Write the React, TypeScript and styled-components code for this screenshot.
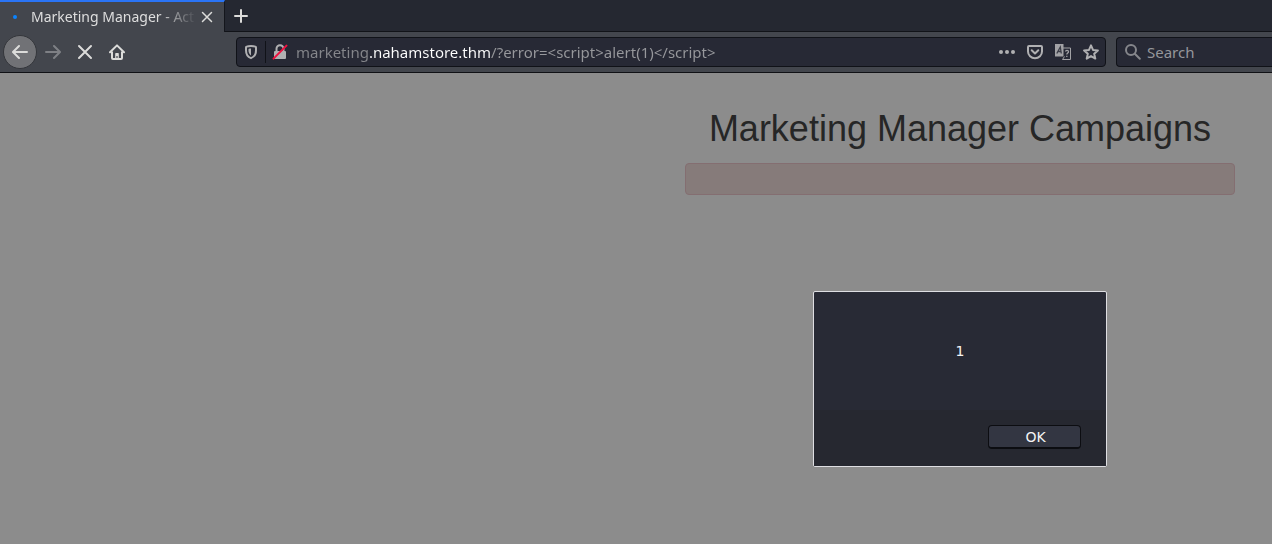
import React, { useState } from "react";
import styled, { createGlobalStyle } from "styled-components";

const GlobalStyle = createGlobalStyle`
  *, *::before, *::after { box-sizing: border-box; }
  html, body, #root { height: 100%; }
  body {
    margin: 0;
    overflow: hidden;
    background: #8c8c8c;
    font-family: "Noto Sans", sans-serif;
    font-size: 15px;
  }
  button { font: inherit; color: inherit; }
`;

const Browser = styled.div`
  display: flex;
  flex-direction: column;
  min-height: 100%;
`;

const TabStrip = styled.header`
  display: flex;
  height: 32px;
  background: #252831;
`;

const Tab = styled.div`
  display: flex;
  align-items: center;
  width: 225px;
  height: 32px;
  padding: 0 7px 0 12px;
  border-top: 2px solid #2a74f5;
  border-right: 1px solid #14161c;
  background: #43464d;
  color: #dedede;
  font-size: 14px;
`;

const Throbber = styled.span`
  width: 4px;
  height: 4px;
  margin: 0 14px 0 1px;
  border-radius: 50%;
  background: #0a84ff;
`;

const TabTitle = styled.span`
  flex: 1;
  white-space: nowrap;
  line-height: 20px;
  -webkit-mask-image: linear-gradient(to left, transparent, #000 40px);
  mask-image: linear-gradient(to left, transparent, #000 40px);
`;

const IconButton = styled.button<{ $size: number; $tone?: string }>`
  display: flex;
  flex: none;
  align-items: center;
  justify-content: center;
  width: ${(p) => p.$size}px;
  height: ${(p) => p.$size}px;
  padding: 0;
  border: 0;
  background: none;
  color: ${(p) => p.$tone ?? "#dcdcda"};
`;

const NewTabArea = styled.div`
  display: flex;
  flex: 1;
  align-items: center;
  padding-left: 2px;
  border-bottom: 1px solid #111318;
`;

const Toolbar = styled.nav`
  display: flex;
  align-items: center;
  height: 41px;
  padding-left: 3px;
  border-bottom: 1px solid #101115;
  background: #43464d;
`;

const BackButton = styled(IconButton)`
  border: 1px solid #34363b;
  border-radius: 50%;
  background: #717276;
`;

const Field = styled.div`
  display: flex;
  align-items: center;
  height: 30px;
  border: 1px solid #101218;
  border-radius: 4px;
  background: #272935;
  color: #a9aaae;
`;

const AddressField = styled(Field)`
  flex: 1;
  min-width: 0;
  margin: 0 10px 0 103px;
`;

const SearchField = styled(Field)`
  width: 156px;
  padding-left: 8px;
  border-right: 0;
  border-radius: 4px 0 0 4px;
  color: #85868b;
`;

const Divider = styled.span`
  width: 1px;
  height: 22px;
  background: #101218;
`;

const TextInput = styled.input`
  flex: 1;
  min-width: 0;
  height: 28px;
  padding: 0;
  border: 0;
  outline: 0;
  background: none;
  color: #dedede;
  font: inherit;
  line-height: 20px;
  &::placeholder { color: #95969b; opacity: 1; }
`;

/* The registrable domain is lit while the rest of the address stays dim. */
const AddressInput = styled(TextInput)`
  background: linear-gradient(to right, #85868b 74px, #ffffff 74px, #ffffff 195px, #97989c 195px);
  -webkit-background-clip: text;
  background-clip: text;
  color: transparent;
  margin-left: 2px;
`;

const SearchInput = styled(TextInput)`
  margin-left: 6px;
`;

const Viewport = styled.main`
  display: flex;
  flex: 1;
  justify-content: flex-end;
  padding: 36px 37px 0;
  background: #8c8c8c;
`;

const Column = styled.section`
  position: relative;
  width: 550px;
  max-width: 100%;
`;

const Heading = styled.h1`
  margin: 0 0 14px;
  color: #262626;
  font: 400 36px/40px "Liberation Sans", Arial, sans-serif;
  text-align: center;
`;

const ErrorBanner = styled.div`
  height: 32px;
  border: 1px solid #846e71;
  border-radius: 4px;
  background: #867b7a;
`;

const Dialog = styled.div`
  position: absolute;
  top: 182px;
  left: 50%;
  width: 294px;
  margin-left: -147px;
  border: 1px solid #dedee2;
  border-radius: 2px;
  background: #282a35;
  color: #f4f4f4;
  font: 14px/20px "DejaVu Sans", sans-serif;
`;

const DialogMessage = styled.p`
  display: flex;
  align-items: center;
  justify-content: center;
  height: 118px;
  margin: 0;
`;

const DialogActions = styled.div`
  display: flex;
  justify-content: flex-end;
  padding: 15px 25px 17px;
  background: #262830;
`;

const OkButton = styled.button`
  width: 93px;
  height: 24px;
  padding: 0 0 0 2px;
  border: 1px solid #0c0d11;
  border-bottom-width: 2px;
  border-radius: 4px;
  background: #333642;
  line-height: 20px;
`;

const Stroke = ({ d, size = 16, width = 2 }: { d: string; size?: number; width?: number }) => (
  <svg width={size} height={size} viewBox="0 0 16 16" fill="none" stroke="currentColor"
    strokeWidth={width} strokeLinecap="round" strokeLinejoin="round" aria-hidden="true">
    <path d={d} />
  </svg>
);

const HomeIcon = () => (
  <svg width="16" height="16" viewBox="0 0 16 16" fill="none" stroke="currentColor" aria-hidden="true">
    <path d="M1 8.3 8 1.4l7 6.9" strokeWidth="2" strokeLinecap="round" strokeLinejoin="round" />
    <path d="M3 7.5V14a1 1 0 0 0 1 1h8a1 1 0 0 0 1-1V7.5" strokeWidth="2" />
    <path d="M6.2 14V9.7a.7.7 0 0 1 .7-.7h2.2a.7.7 0 0 1 .7.7V14H8.6v-2H7.4v2z" fill="currentColor" stroke="none" />
  </svg>
);

const ShieldIcon = () => (
  <svg width="14" height="16" viewBox="0 0 14 16" fill="none" aria-hidden="true">
    <path d="M7 1.9c1.7 0 3.4.3 4.4.7.4.1.6.4.6.8v2.8c0 3.8-2 6.8-5 7.9-3-1.1-5-4.1-5-7.9V3.4c0-.4.2-.7.6-.8 1-.4 2.7-.7 4.4-.7Z" stroke="currentColor" strokeWidth="2" />
    <path d="M7 4.5v7c-1.600-1-2.500-2.900-2.500-5.200V4.900C5.200 4.600 6 4.500 7 4.500Z" fill="currentColor" />
  </svg>
);

const InsecureIcon = () => (
  <svg width="16" height="16" viewBox="0 0 16 16" fill="none" aria-hidden="true">
    <path d="M4.500 8V4.800a3.500 3.500 0 0 1 7 0V8" stroke="currentColor" strokeWidth="2" />
    <rect x="2" y="7" width="12" height="8" rx="1" fill="currentColor" />
    <path d="M1.500 14.600 14.500 1.600" stroke="#f0103f" strokeWidth="2" strokeLinecap="round" />
  </svg>
);

const DotsIcon = () => (
  <svg width="16" height="16" viewBox="0 0 16 16" fill="currentColor" aria-hidden="true">
    <circle cx="2" cy="8" r="2" /><circle cx="8" cy="8" r="2" /><circle cx="14" cy="8" r="2" />
  </svg>
);

const PocketIcon = () => (
  <svg width="16" height="16" viewBox="0 0 16 16" fill="none" stroke="currentColor" strokeWidth="2"
    strokeLinecap="round" strokeLinejoin="round" aria-hidden="true">
    <path d="M2 2h12a1 1 0 0 1 1 1v4.500a7 6.700 0 0 1-14 0V3a1 1 0 0 1 1-1Z" />
    <path d="m4.700 6.300 3.300 3.200 3.300-3.200" />
  </svg>
);

const TranslateIcon = () => (
  <svg width="18" height="18" viewBox="0 0 18 18" fill="none" aria-hidden="true">
    <path d="M9 5h7.500v11.500h-8l2-3" stroke="currentColor" />
    <path d="M1 1h8.500v12.500H1z" fill="currentColor" />
    <path d="M2.800 10.500 6.300 4l1 6.500M4.300 8.500H7" stroke="#3c3e48" strokeWidth="1.300" />
    <path d="M11.500 8.500c.2-1.400 3-1.400 3 .2 0 1.400-1.700 1.200-1.700 2.800M12.800 12.700v1.300" stroke="currentColor" strokeWidth="1.300" />
  </svg>
);

const StarIcon = () => (
  <svg width="16" height="16" viewBox="0 0 16 16" fill="none" stroke="currentColor" strokeWidth="2"
    strokeLinejoin="round" aria-hidden="true">
    <path d="m8 1.400 2 4.500 4.900.5-3.700 3.300 1.100 4.900L8 12.100l-4.300 2.500 1.100-4.900L1.100 6.400 6 5.900Z" />
  </svg>
);

const SearchIcon = () => (
  <svg width="16" height="16" viewBox="0 0 16 16" fill="none" stroke="currentColor" strokeWidth="2"
    strokeLinecap="round" aria-hidden="true">
    <circle cx="6" cy="6" r="5" /><path d="m9.800 9.800 5 5" />
  </svg>
);

export default function App() {
  const [open, setOpen] = useState(true);
  return (
    <Browser>
      <GlobalStyle />
      <TabStrip>
        <Tab>
          <Throbber />
          <TabTitle>Marketing Manager - Act</TabTitle>
          <IconButton $size={20} aria-label="Close tab">
            <Stroke size={12} d="M2 2l12 12M14 2 2 14" />
          </IconButton>
        </Tab>
        <NewTabArea>
          <IconButton $size={28} aria-label="New tab">
            <Stroke d="M8 2v12M2 8h12" />
          </IconButton>
        </NewTabArea>
      </TabStrip>
      <Toolbar>
        <BackButton $size={34} aria-label="Back">
          <Stroke d="M15 8H1.500M7 2 1 8l6 6" />
        </BackButton>
        <IconButton $size={32} $tone="#7e8085" aria-label="Forward" disabled>
          <Stroke d="M1 8h13.500M9 2l6 6-6 6" />
        </IconButton>
        <IconButton $size={32} aria-label="Stop">
          <Stroke d="M2 2l12 12M14 2 2 14" />
        </IconButton>
        <IconButton $size={32} aria-label="Home">
          <HomeIcon />
        </IconButton>
        <AddressField>
          <IconButton $size={28} $tone="#b0b0b2" aria-label="Tracking protection"><ShieldIcon /></IconButton>
          <Divider />
          <IconButton $size={28} $tone="#b0b0b2" aria-label="Connection is not secure"><InsecureIcon /></IconButton>
          <AddressInput
            aria-label="Address"
            spellCheck={false}
            defaultValue="marketing.nahamstore.thm/?error=<script>alert(1)</script>"
          />
          <IconButton $size={28} $tone="#b0b0b2" aria-label="Page actions"><DotsIcon /></IconButton>
          <IconButton $size={28} $tone="#b0b0b2" aria-label="Save to Pocket"><PocketIcon /></IconButton>
          <IconButton $size={28} $tone="#a2a2a5" aria-label="Translate"><TranslateIcon /></IconButton>
          <IconButton $size={28} $tone="#b0b0b2" aria-label="Bookmark"><StarIcon /></IconButton>
        </AddressField>
        <SearchField>
          <SearchIcon />
          <SearchInput aria-label="Search" placeholder="Search" />
        </SearchField>
      </Toolbar>
      <Viewport>
        <Column>
          <Heading>Marketing Manager Campaigns</Heading>
          <ErrorBanner role="alert" />
          {open && (
            <Dialog role="alertdialog" aria-modal="true" aria-describedby="message">
              <DialogMessage id="message">1</DialogMessage>
              <DialogActions>
                <OkButton onClick={() => setOpen(false)}>OK</OkButton>
              </DialogActions>
            </Dialog>
          )}
        </Column>
      </Viewport>
    </Browser>
  );
}
